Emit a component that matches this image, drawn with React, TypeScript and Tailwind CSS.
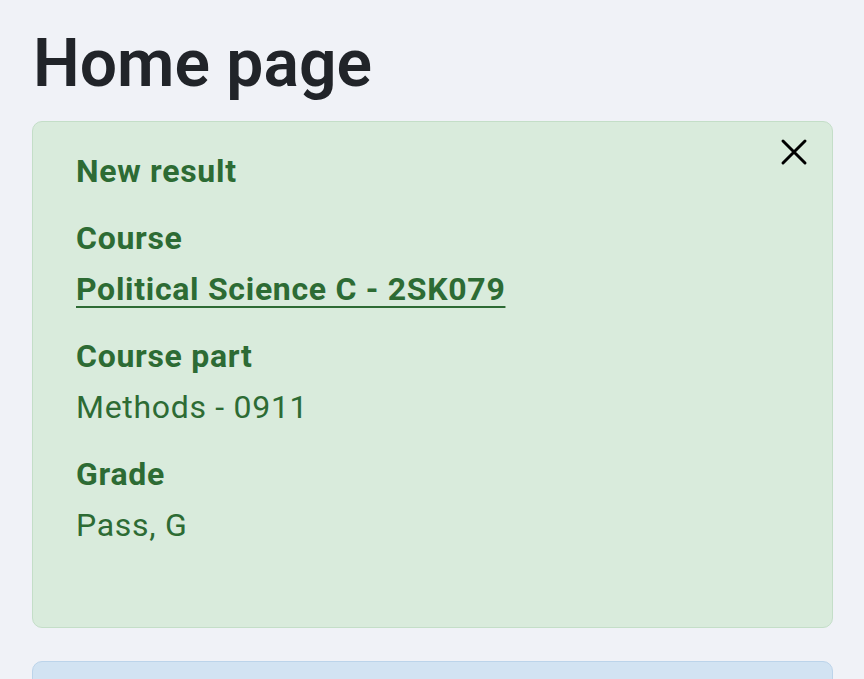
import React from "react";

const Field = ({ label, children }: { label: string; children: React.ReactNode }) => (
  <div className="mt-4">
    <div className="font-bold">{label}</div>
    <div>{children}</div>
  </div>
);

export default function App() {
  return (
    <div
      className="min-h-[679px] bg-[#f0f2f7] pl-8 pr-[31px] pt-[22px]"
      style={{ fontFamily: "Roboto, 'Noto Sans', sans-serif" }}
    >
      <h1 className="text-[66px] font-semibold leading-[84px] text-[#212429] pl-[1px]">Home page</h1>
      <div className="relative mt-[15px] rounded-[10px] border border-[#c4dec8] bg-[#d9ebdc] pl-[43px] pr-10 pt-[24px] pb-[76px] text-[32px] tracking-[0.7px] leading-[51px] text-[#2d6b34]">
        <button className="absolute right-[20px] top-[12px] p-1 text-black" aria-label="Close">
          <svg width="28" height="28" viewBox="0 0 28 28" fill="none" stroke="currentColor" strokeWidth="3" strokeLinecap="round">
            <path d="M3 3 L25 25 M25 3 L3 25" />
          </svg>
        </button>
        <div className="font-bold">New result</div>
        <Field label="Course">
          <a href="#" className="font-bold underline decoration-2 underline-offset-[6px]">
            Political Science C - 2SK079
          </a>
        </Field>
        <Field label="Course part">Methods - 0911</Field>
        <Field label="Grade">Pass, G</Field>
      </div>
      <div className="mt-[33px] h-[60px] rounded-[10px] border border-[#bcd4ea] bg-[#d2e3f2]" />
    </div>
  );
}
